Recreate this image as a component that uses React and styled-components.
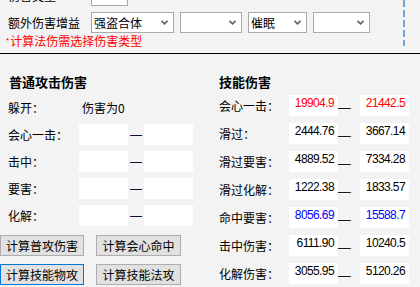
import React from "react";
import styled, { createGlobalStyle } from "styled-components";

const GlobalStyle = createGlobalStyle`
  body {
    margin: 0;
    background: #f3f3f3;
    font-family: "Noto Sans CJK SC", "Liberation Sans", sans-serif;
    font-size: 12px;
    color: #000;
  }
`;

const skillRows = [
  { label: "会心一击：", min: "19904.9", max: "21442.5", color: "#ff0000" },
  { label: "滑过：", min: "2444.76", max: "3667.14" },
  { label: "滑过要害：", min: "4889.52", max: "7334.28" },
  { label: "滑过化解：", min: "1222.38", max: "1833.57" },
  { label: "命中要害：", min: "8056.69", max: "15588.7", color: "#0000ff" },
  { label: "击中伤害：", min: "6111.90", max: "10240.5" },
  { label: "化解伤害：", min: "3055.95", max: "5120.26" },
];

const normalRows = ["会心一击：", "击中：", "要害：", "化解："];

export default function App() {
  return (
    <Page>
      <GlobalStyle />
      <TopPanel>
        <Fields>
          <FieldRow>
            <FieldLabel>伤害类型</FieldLabel>
            <Combos>
              <Combo $w={37} />
            </Combos>
          </FieldRow>
          <FieldRow>
            <FieldLabel>额外伤害增益</FieldLabel>
            <Combos>
              <Combo $w={83} value="强盗合体" />
              <Combo $w={62} />
              <Combo $w={59} value="催眠" />
              <Combo $w={57} />
            </Combos>
          </FieldRow>
          <Note>
            <Star>*</Star>计算法伤需选择伤害类型
          </Note>
        </Fields>
        <Guide />
      </TopPanel>

      <Main>
        <LeftCol>
          <Heading $pad={9}>普通攻击伤害</Heading>
          <DodgeRow>
            <DodgeLabel>躲开：</DodgeLabel>
            <span>伤害为0</span>
          </DodgeRow>
          <InputGrid>
            {normalRows.map((r) => (
              <React.Fragment key={r}>
                <RowLabel>{r}</RowLabel>
                <InputBox />
                <EmDash>—</EmDash>
                <InputBox />
              </React.Fragment>
            ))}
          </InputGrid>
          <ButtonGrid>
            <Button>计算普攻伤害</Button>
            <Button>计算会心命中</Button>
            <Button $focused>计算技能物攻</Button>
            <Button>计算技能法攻</Button>
          </ButtonGrid>
        </LeftCol>

        <RightCol>
          <Heading>技能伤害</Heading>
          <ValueGrid>
            {skillRows.map((r) => (
              <React.Fragment key={r.label}>
                <RowLabel>{r.label}</RowLabel>
                <ValueBox $color={r.color}>{r.min}</ValueBox>
                <Under>__</Under>
                <ValueBox $color={r.color}>{r.max}</ValueBox>
              </React.Fragment>
            ))}
          </ValueGrid>
        </RightCol>
      </Main>
    </Page>
  );
}

function Combo({ $w, value }) {
  return (
    <ComboBox $w={$w}>
      <span>{value || ""}</span>
      <svg width="7" height="5" viewBox="0 0 7 5">
        <polyline points="0.5,0.8 3.5,3.8 6.5,0.8" fill="none" stroke="#5f5f5f" strokeWidth="1.6" />
      </svg>
    </ComboBox>
  );
}

const Page = styled.div`
  width: 420px;
  height: 287px;
  overflow: hidden;
  background: #f3f3f3;
`;

const TopPanel = styled.div`
  display: flex;
  height: 68px;
  margin-top: -15px;
  border-bottom: 1px solid #000;
`;

const Fields = styled.div`
  display: flex;
  flex-direction: column;
`;

const FieldRow = styled.div`
  display: flex;
  align-items: center;
  height: 21px;
  & + & {
    margin-top: 6px;
  }
`;

const FieldLabel = styled.div`
  width: 91px;
  box-sizing: border-box;
  padding-left: 8px;
  line-height: 14px;
`;

const Combos = styled.div`
  display: flex;
  gap: 6px;
`;

const ComboBox = styled.div`
  width: ${(p) => p.$w}px;
  height: 21px;
  box-sizing: border-box;
  border: 1px solid #a9a9a9;
  background: #fff;
  display: flex;
  align-items: center;
  justify-content: space-between;
  padding: 0 5px 0 2px;
  line-height: 14px;
  svg {
    flex: none;
  }
`;

const Note = styled.div`
  margin-top: 1px;
  padding-left: 6px;
  line-height: 14px;
  color: #ff0000;
`;

const Star = styled.span`
  font-family: "Liberation Sans", sans-serif;
  font-size: 8px;
  vertical-align: top;
  margin-right: 1px;
`;

const Guide = styled.div`
  margin-left: auto;
  margin-right: 15px;
  margin-top: 15px;
  width: 2px;
  height: 46px;
  background: repeating-linear-gradient(to bottom, #72a6d8 0 7px, transparent 7px 10px);
`;

const Main = styled.div`
  display: flex;
  height: 232px;
`;

const LeftCol = styled.div`
  width: 219px;
  padding-top: 20px;
  display: flex;
  flex-direction: column;
`;

const RightCol = styled.div`
  padding-top: 20px;
  display: flex;
  flex-direction: column;
`;

const Heading = styled.div`
  font-weight: bold;
  font-size: 13px;
  line-height: 16px;
  padding-left: ${(p) => p.$pad || 0}px;
`;

const DodgeRow = styled.div`
  margin-top: 9px;
  height: 16px;
  display: flex;
  align-items: center;
  padding-left: 8px;
`;

const DodgeLabel = styled.span`
  width: 74px;
`;

const InputGrid = styled.div`
  margin-top: 9px;
  padding-left: 8px;
  display: grid;
  grid-template-columns: 71px 49px 16px 49px;
  grid-auto-rows: 21px;
  row-gap: 6px;
  align-items: center;
`;

const RowLabel = styled.div`
  line-height: 14px;
  white-space: nowrap;
`;

const InputBox = styled.div`
  height: 21px;
  background: #fff;
`;

const EmDash = styled.span`
  font-family: "Liberation Sans", sans-serif;
  text-align: center;
  color: #101030;
  line-height: 14px;
`;

const ButtonGrid = styled.div`
  margin-top: 9px;
  display: grid;
  grid-template-columns: 84px 85px;
  grid-auto-rows: 21px;
  column-gap: 12px;
  row-gap: 8px;
`;

const Button = styled.button`
  margin: 0;
  padding: 0;
  font: inherit;
  color: #000;
  background: #e1e1e1;
  border: 1px solid ${(p) => (p.$focused ? "#0078d7" : "#adadad")};
  line-height: 14px;
`;

const ValueGrid = styled.div`
  margin-top: 5px;
  display: grid;
  grid-template-columns: 70px 49px 22px 49px;
  grid-auto-rows: 21px;
  row-gap: 7px;
  align-items: center;
`;

const ValueBox = styled.div`
  height: 21px;
  box-sizing: border-box;
  background: #fff;
  text-align: right;
  padding: 1px 4px 0 0;
  font-family: "Liberation Sans", sans-serif;
  font-size: 12px;
  letter-spacing: -0.6px;
  line-height: 14px;
  color: ${(p) => p.$color || "#000"};
`;

const Under = styled.span`
  align-self: start;
  font-family: "Liberation Sans", sans-serif;
  font-size: 12px;
  line-height: 14px;
  letter-spacing: -0.6px;
`;
